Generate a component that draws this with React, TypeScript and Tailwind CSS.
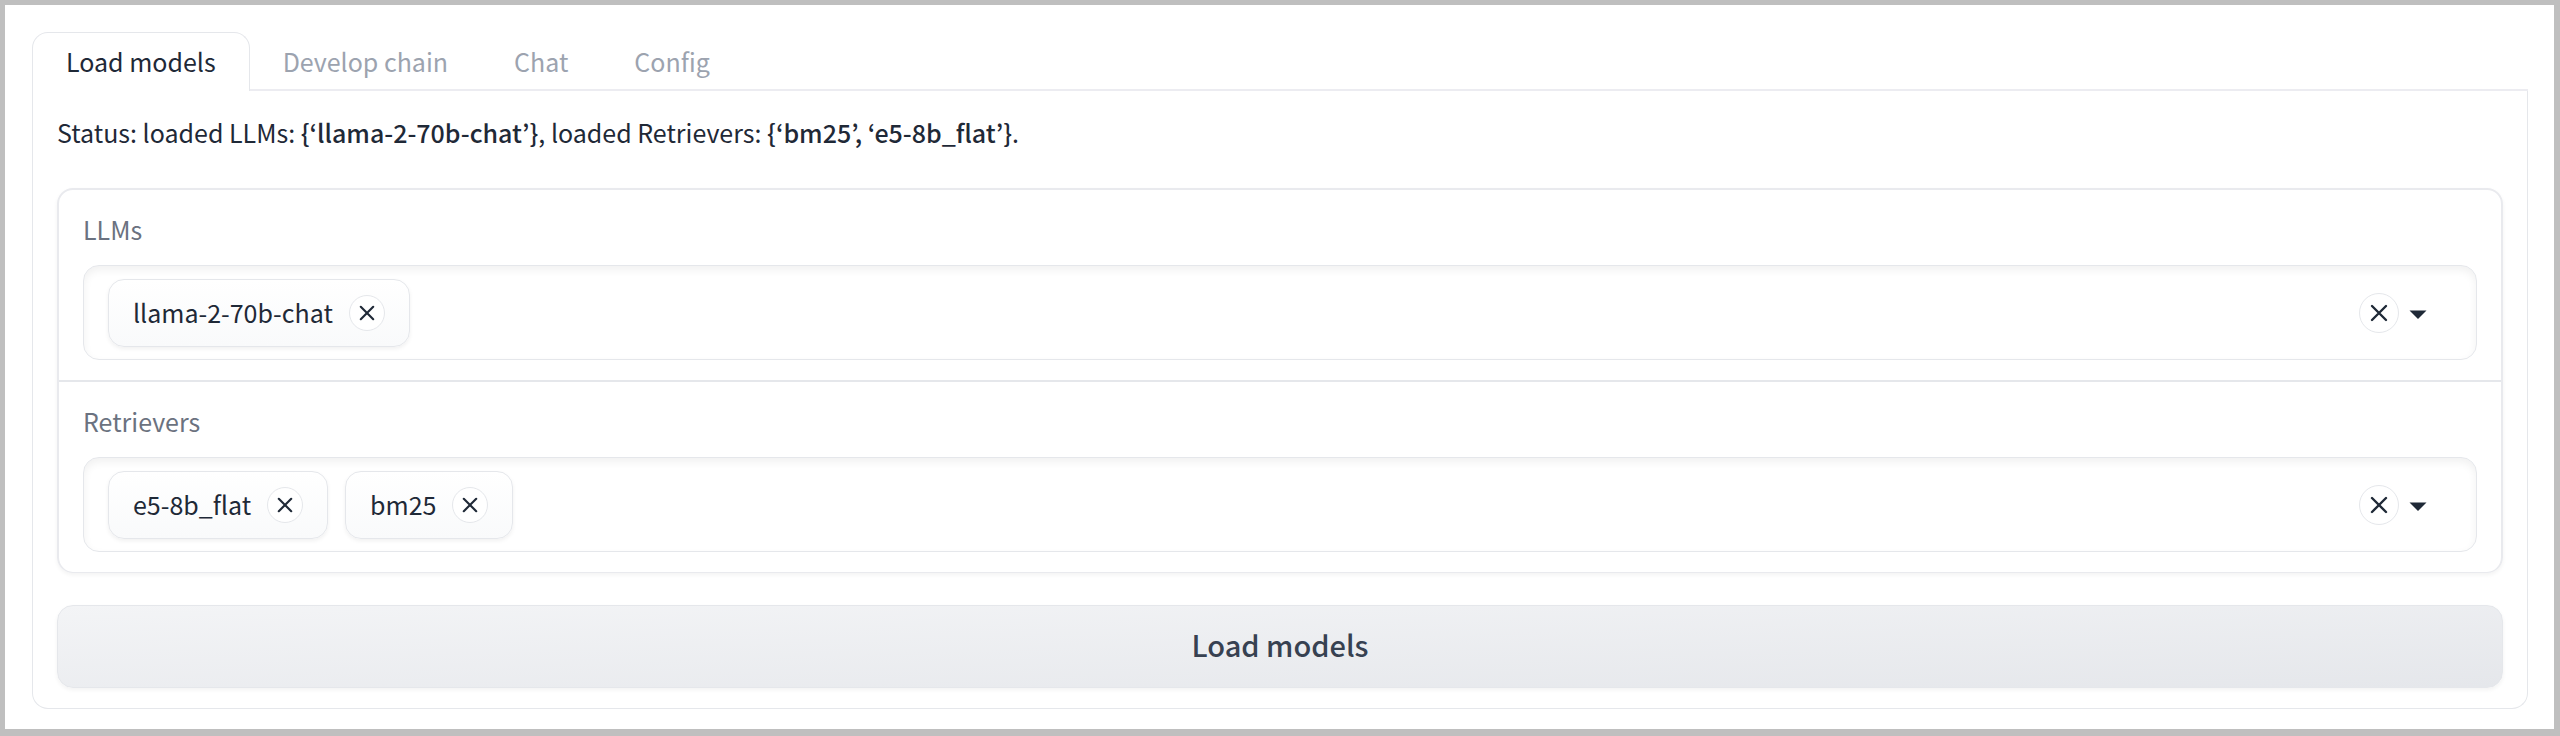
import React, { useState } from "react";

const TABS = ["Load models", "Develop chain", "Chat", "Config"];

function CrossIcon({ className }: { className: string }) {
  return (
    <svg viewBox="0 0 18 18" className={className} fill="none" stroke="currentColor" strokeWidth="2.4" strokeLinecap="round" aria-hidden="true">
      <path d="M2 2 L16 16 M16 2 L2 16" />
    </svg>
  );
}

function Chip({ label, onRemove }: { label: string; onRemove: () => void }) {
  return (
    <span className="flex h-[68px] items-center gap-4 rounded-2xl border border-[#e5e7eb] bg-linear-to-b from-white to-[#f9fafb] px-6 shadow-[0_2px_4px_rgba(0,0,0,0.06)]">
      <span>{label}</span>
      <button
        type="button"
        aria-label={`Remove ${label}`}
        onClick={onRemove}
        className="flex size-9 items-center justify-center rounded-full border border-[#e5e7eb] bg-white"
      >
        <CrossIcon className="size-4" />
      </button>
    </span>
  );
}

function MultiSelect({ id, label, initial }: { id: string; label: string; initial: string[] }) {
  const [items, setItems] = useState(initial);
  return (
    <div className="px-6 pt-[19px] pb-5">
      <label htmlFor={id} className="block leading-10 text-[#6b7280]">
        {label}
      </label>
      <div className="mt-4 flex h-[95px] items-center gap-[17px] rounded-2xl border border-[#e5e7eb] bg-white pr-[49px] pl-6 shadow-[inset_0_4px_8px_rgba(0,0,0,0.06)]">
        {items.map((item) => (
          <Chip key={item} label={item} onRemove={() => setItems(items.filter((i) => i !== item))} />
        ))}
        <input id={id} type="text" autoComplete="off" className="min-w-0 flex-1 bg-transparent outline-none" />
        <div className="flex items-center gap-2.5">
          <button
            type="button"
            aria-label={`Clear ${label}`}
            onClick={() => setItems([])}
            className="flex size-10 items-center justify-center rounded-full border border-[#e5e7eb] bg-white"
          >
            <CrossIcon className="size-[18px]" />
          </button>
          <svg viewBox="0 0 18 10" className="mt-1 h-2.5 w-[18px]" fill="currentColor" aria-hidden="true">
            <path d="M0.5 0.5 H17.5 L9 9 Z" />
          </svg>
        </div>
      </div>
    </div>
  );
}

export default function App() {
  const [active, setActive] = useState(TABS[0]);
  return (
    <main
      lang="en"
      className="min-h-screen border-t-5 border-r-6 border-b-7 border-l-5 border-[#bfbfbf] bg-white pt-[27px] pr-[26px] pb-5 pl-[27px] font-['Noto_Sans_CJK_KR',sans-serif] text-[25px] text-[#1f2937]"
    >
      <div role="tablist" className="flex border-b-2 border-[#ececf1]">
        {TABS.map((tab) => (
          <button
            key={tab}
            type="button"
            role="tab"
            aria-selected={tab === active}
            onClick={() => setActive(tab)}
            className={
              tab === active
                ? "-mb-0.5 h-[59px] rounded-t-2xl border border-b-0 border-[#e5e7eb] bg-white px-[33px] pb-0.5 leading-10"
                : "h-[57px] border border-b-0 border-transparent px-8 leading-10 text-[#9ca3af]"
            }
          >
            {tab}
          </button>
        ))}
      </div>
      <div role="tabpanel" className="rounded-b-2xl border border-t-0 border-[#e5e7eb] px-6 pt-[21px] pb-5">
        <p className="leading-10">
          Status: loaded LLMs: <strong className="font-medium">{"{‘llama-2-70b-chat’}"}</strong>, loaded Retrievers:{" "}
          <strong className="font-medium">{"{‘bm25’, ‘e5-8b_flat’}"}</strong>.
        </p>
        <div className="mt-9 rounded-2xl border-x-2 border-t-2 border-b border-[#e9eaee] shadow-[0_2px_4px_rgba(0,0,0,0.05)]">
          <MultiSelect id="llms" label="LLMs" initial={["llama-2-70b-chat"]} />
          <div className="h-0.5 bg-[#e5e7eb]" />
          <MultiSelect id="retrievers" label="Retrievers" initial={["e5-8b_flat", "bm25"]} />
        </div>
        <button
          type="button"
          className="mt-8 h-[83px] w-full rounded-2xl border border-[#e5e7eb] bg-linear-to-br from-[#f3f4f6] to-[#e5e7eb] pb-1 text-[29px] font-medium text-[#374151] shadow-[0_2px_4px_rgba(0,0,0,0.05)]"
        >
          Load models
        </button>
      </div>
    </main>
  );
}
